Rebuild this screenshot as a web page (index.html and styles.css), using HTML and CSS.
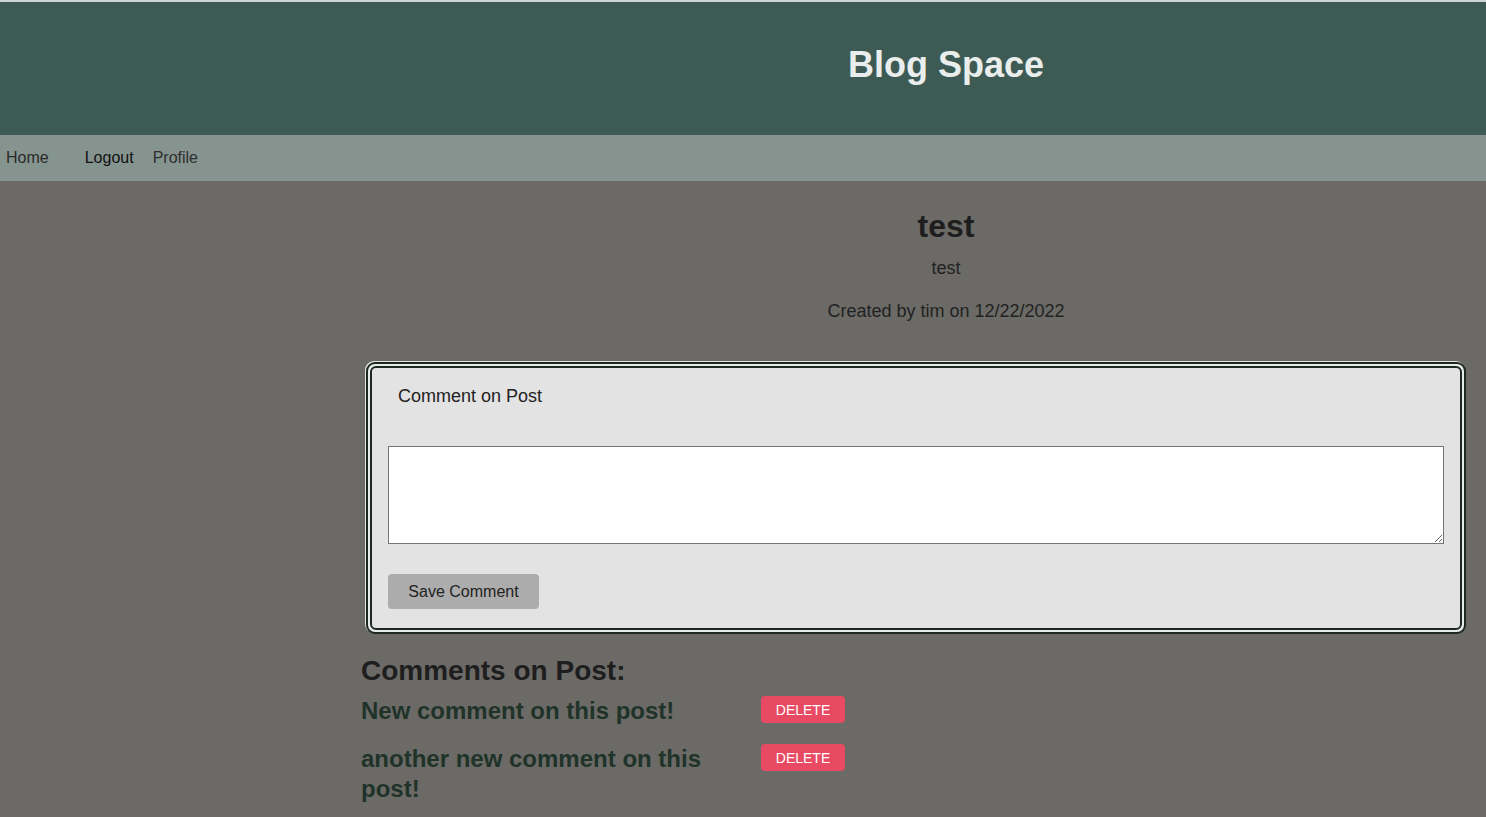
FILE: index.html
```html
<!DOCTYPE html>
<html lang="en">
<head>
<meta charset="utf-8">
<title>Blog Space</title>
<link rel="stylesheet" href="styles.css">
</head>
<body>
<header class="site-header">
  <h1 class="site-title">Blog Space</h1>
</header>
<nav class="site-nav">
  <a class="nav-link nav-home" href="#">Home</a>
  <a class="nav-link nav-logout" href="#">Logout</a>
  <a class="nav-link nav-profile" href="#">Profile</a>
</nav>
<main class="main">
  <section class="post">
    <h2 class="post-title">test</h2>
    <p class="post-body">test</p>
    <p class="post-meta">Created by tim on 12/22/2022</p>
  </section>
  <div class="card-outer">
    <form class="card-inner">
      <label class="comment-label" for="comment">Comment on Post</label>
      <textarea id="comment" class="comment-input"></textarea>
      <button type="button" class="save-btn">Save Comment</button>
    </form>
  </div>
  <h3 class="comments-heading">Comments on Post:</h3>
  <div class="comment-row">
    <p class="comment-text">New comment on this post!</p>
    <button type="button" class="delete-btn">DELETE</button>
  </div>
  <div class="comment-row">
    <p class="comment-text">another new comment on this post!</p>
    <button type="button" class="delete-btn">DELETE</button>
  </div>
</main>
</body>
</html>
```
FILE: styles.css
```css
html, body {
  margin: 0;
  padding: 0;
}
body {
  background: #6b6a66;
  font-family: "Liberation Sans", Arial, sans-serif;
  color: #222;
  min-height: 817px;
  border-top: 2px solid #cfd3d1;
}
.site-header {
  background: #3d5a54;
  height: 133px;
  padding-left: 406px;
  box-sizing: border-box;
  display: flex;
  justify-content: center;
}
.site-title {
  margin: 43px 0 0 0;
  font-size: 36px;
  line-height: 40px;
  font-weight: bold;
  color: #e9edeb;
}
.site-nav {
  background: #869490;
  height: 46px;
  display: flex;
  align-items: center;
}
.nav-link {
  font-size: 16px;
  color: #222;
  text-decoration: none;
}
.nav-home { margin-left: 6px; color: #2a2a2a; }
.nav-logout { margin-left: 36px; color: #111; }
.nav-profile { margin-left: 19px; color: #2e2e2e; }
.main {
  padding-left: 361px;
  padding-bottom: 40px;
}
.post {
  padding-left: 45px;
  text-align: center;
  padding-top: 27px;
}
.post-title {
  margin: 0;
  font-size: 32px;
  line-height: 37px;
  font-weight: bold;
  color: #1e1e1e;
}
.post-body {
  margin: 13px 0 0 0;
  font-size: 18px;
  line-height: 21px;
  color: #222;
}
.post-meta {
  margin: 22px 0 0 0;
  font-size: 18px;
  line-height: 21px;
  color: #222;
}
.card-outer {
  margin: 40px 0 0 5px;
  width: 1100px;
  box-sizing: border-box;
  border: 2px solid #1d2823;
  border-radius: 9px;
  padding: 2px;
  background: #e8ece9;
  box-shadow: -1px -1px 0 0 #dfe6e2;
}
.card-inner {
  background: #e3e3e3;
  border: 2px solid #1d2823;
  border-radius: 6px;
  padding: 18px 16px 19px 16px;
  display: flex;
  flex-direction: column;
  align-items: flex-start;
}
.comment-label {
  margin-left: 10px;
  font-size: 18px;
  line-height: 21px;
  color: #222;
}
.comment-input {
  display: block;
  margin-top: 39px;
  width: 100%;
  height: 98px;
  box-sizing: border-box;
  border: 1px solid #767676;
  background: #fff;
  resize: vertical;
  font-family: inherit;
}
.save-btn {
  margin-top: 30px;
  width: 151px;
  height: 35px;
  border: none;
  border-radius: 4px;
  background: #acacac;
  font-family: inherit;
  font-size: 16px;
  color: #222;
  padding: 0;
}
.comments-heading {
  margin: 21px 0 0 0;
  font-size: 28px;
  line-height: 32px;
  font-weight: bold;
  color: #1e1e1e;
}
.comment-row {
  display: flex;
  align-items: flex-start;
  margin-top: 9px;
}
.comment-row + .comment-row {
  margin-top: 18px;
}
.comment-text {
  margin: 0;
  width: 380px;
  font-size: 24px;
  line-height: 30px;
  font-weight: bold;
  color: #1f3329;
}
.delete-btn {
  margin-left: 20px;
  width: 84px;
  height: 27px;
  border: none;
  border-radius: 4px;
  background: #e84a64;
  color: #fff;
  font-family: inherit;
  font-size: 14px;
  padding: 0;
}
```
